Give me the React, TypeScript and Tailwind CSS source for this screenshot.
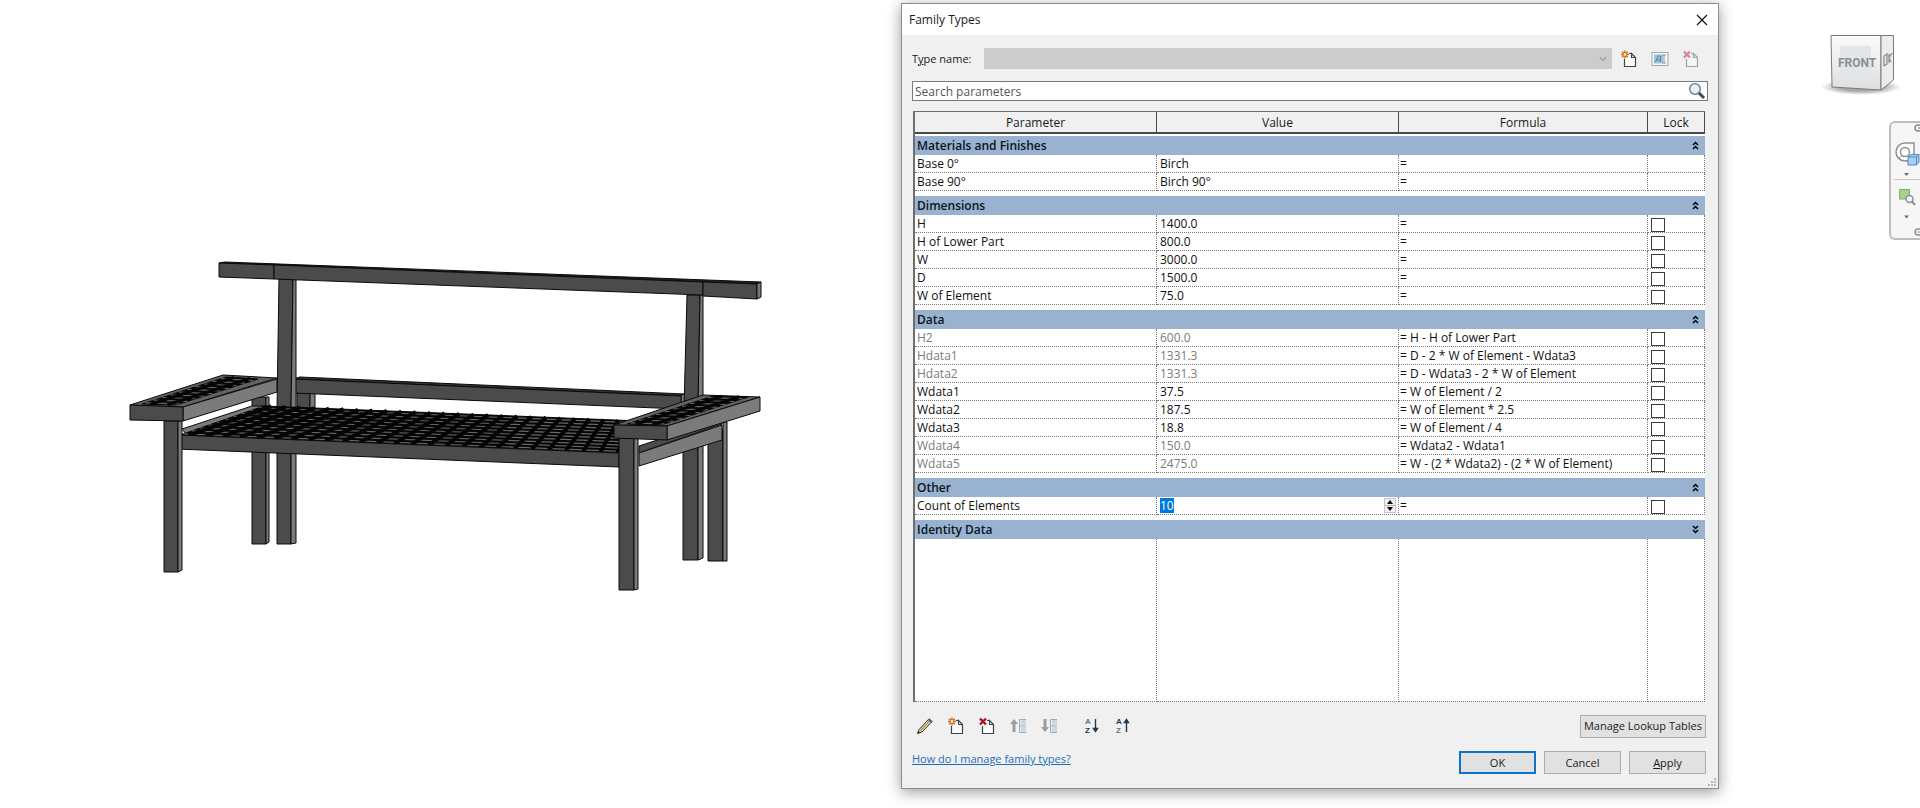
import { Fragment, useState } from 'react';
import type { ReactNode } from 'react';

interface Param {
  name: string;
  value: string;
  formula?: string;
  muted?: boolean;
  lock?: boolean;
  spinner?: boolean;
}

interface ParamGroup {
  title: string;
  rows: Param[];
}

const GROUPS: ParamGroup[] = [
  {
    title: 'Materials and Finishes',
    rows: [
      { name: 'Base 0°', value: 'Birch', lock: false },
      { name: 'Base 90°', value: 'Birch 90°', lock: false },
    ],
  },
  {
    title: 'Dimensions',
    rows: [
      { name: 'H', value: '1400.0' },
      { name: 'H of Lower Part', value: '800.0' },
      { name: 'W', value: '3000.0' },
      { name: 'D', value: '1500.0' },
      { name: 'W of Element', value: '75.0' },
    ],
  },
  {
    title: 'Data',
    rows: [
      { name: 'H2', value: '600.0', formula: 'H - H of Lower Part', muted: true },
      { name: 'Hdata1', value: '1331.3', formula: 'D - 2 * W of Element - Wdata3', muted: true },
      { name: 'Hdata2', value: '1331.3', formula: 'D - Wdata3 - 2 * W of Element', muted: true },
      { name: 'Wdata1', value: '37.5', formula: 'W of Element / 2' },
      { name: 'Wdata2', value: '187.5', formula: 'W of Element * 2.5' },
      { name: 'Wdata3', value: '18.8', formula: 'W of Element / 4' },
      { name: 'Wdata4', value: '150.0', formula: 'Wdata2 - Wdata1', muted: true },
      { name: 'Wdata5', value: '2475.0', formula: 'W - (2 * Wdata2) - (2 * W of Element)', muted: true },
    ],
  },
  { title: 'Other', rows: [{ name: 'Count of Elements', value: '10', spinner: true }] },
  { title: 'Identity Data', rows: [] },
];

type Point = [number, number];

const FRONT = '#4b4b4b';
const SIDE = '#7b7b7b';

const mix = (a: Point, b: Point, t: number): Point => [a[0] + (b[0] - a[0]) * t, a[1] + (b[1] - a[1]) * t];

function Face({ points, fill = FRONT }: { points: string; fill?: string }) {
  return <polygon points={points} fill={fill} stroke="#0a0a0a" strokeWidth="1" strokeLinejoin="round" />;
}

// Black panel crossed by thin slats. Corners run back-left, back-right, front-right, front-left.
function Lattice({ corners, slats, breaks, gap }: { corners: Point[]; slats: number; breaks: number; gap: number }) {
  const [bl, br, fr, fl] = corners;
  return (
    <g>
      <polygon points={corners.map((p) => p.join(',')).join(' ')} fill="#050505" stroke="#050505" />
      {Array.from({ length: slats }, (_, i) => {
        const t = (i + 0.6) / slats;
        const a = mix(bl, fl, t);
        const b = mix(br, fr, t);
        return <line key={i} x1={a[0]} y1={a[1]} x2={b[0]} y2={b[1]} stroke="#686868" strokeWidth="1.2" />;
      })}
      {Array.from({ length: breaks }, (_, i) => {
        const t = (i + 0.5) / breaks;
        const a = mix(bl, br, t);
        const b = mix(fl, fr, t);
        return <line key={i} x1={a[0]} y1={a[1]} x2={b[0]} y2={b[1]} stroke="#050505" strokeWidth={gap} />;
      })}
    </g>
  );
}

function Bench() {
  return (
    <svg viewBox="0 0 901 808" className="block w-full" role="img" aria-label="Bench model">
      {/* back legs */}
      <Face points="252,397 266,397 266,544 252,544" />
      <Face points="266,397 269,397 269,542 266,544" fill={SIDE} />
      <Face points="297,393 310,393 310,412 297,412" />
      <Face points="310,393 315,393 315,412 310,412" fill={SIDE} />
      <Face points="708,430 723,430 723,561 708,561" />
      <Face points="723,422 727,422 727,561 723,561" fill={SIDE} />
      <Face points="683,445 698,440 698,560 683,560" />
      <Face points="698,440 703,440 703,558 698,560" fill={SIDE} />
      <Face points="277,445 291,445 291,544 277,544" />
      <Face points="291,445 296,445 296,543 291,544" fill={SIDE} />

      {/* lower back rail */}
      <Face points="293,379 300,377 685,394 681,396" fill="#333" />
      <Face points="681,395 685,394 685,408 681,409" fill={SIDE} />
      <Face points="293,379 681,396 681,409 293,393" />

      {/* uprights */}
      <Face points="279,278 293,278 291,408 277,408" />
      <Face points="293,278 296,278 296,408 291,408" fill={SIDE} />
      <Face points="687,295 700,295 698,408 684,408" />
      <Face points="700,295 703,295 703,402 698,408" fill={SIDE} />

      {/* top rail */}
      <Face points="219,263 225,262 761,282 757,284 703,282 274,265" fill="#222" />
      <Face points="219,263 274,265 274,279 219,277" />
      <Face points="274,265 703,282 703,295 274,279" />
      <Face points="703,282 757,284 757,299 703,296" />
      <Face points="757,284 761,282 761,297 757,299" fill={SIDE} />

      {/* seat */}
      <Face points="182,429 252,406 266,406 186,434" fill={SIDE} />
      <Lattice
        corners={[
          [264, 406],
          [640, 421],
          [626, 453],
          [180, 435],
        ]}
        slats={10}
        breaks={26}
        gap={4}
      />
      <Face points="177,435 619,453 619,467 177,449" />
      <Face points="639,446 722,419 722,424 639,453" />
      <Face points="639,453 722,425 722,440 639,466" fill={SIDE} />

      {/* left arm */}
      <Face points="164,421 178,421 178,572 164,572" />
      <Face points="178,421 182,421 182,570 178,572" fill={SIDE} />
      <Face points="130,405 223,375 277,378 183,407" fill="#626262" />
      <Lattice
        corners={[
          [226, 377],
          [258, 379],
          [176, 405],
          [142, 404],
        ]}
        slats={10}
        breaks={2}
        gap={3}
      />
      <Face points="183,407 277,379 277,392 183,421" fill={SIDE} />
      <Face points="130,405 183,407 183,421 130,420" />

      {/* right arm */}
      <Face points="619,438 634,438 634,590 619,590" />
      <Face points="634,438 638,438 638,589 634,590" fill={SIDE} />
      <Face points="614,425 703,395 760,397 667,426" fill="#626262" />
      <Lattice
        corners={[
          [713, 396],
          [748, 397],
          [661, 425],
          [627, 424],
        ]}
        slats={10}
        breaks={2}
        gap={3}
      />
      <Face points="667,426 760,397 760,411 667,440" fill={SIDE} />
      <Face points="614,425 667,426 667,440 614,438" />
    </svg>
  );
}

function SheetIcon({ mark, faded }: { mark: 'new' | 'delete'; faded?: boolean }) {
  return (
    <svg width="18" height="18" viewBox="0 0 18 18" className={faded ? 'opacity-45' : ''}>
      <path d="M4.5 8V16.5H15.5V7.500L11.5 3.500H8Z" fill="#fafafa" />
      <path d="M4.5 9V16.5H15.5V7.5H11.5V3.5L15.5 7.5M11.5 3.5H9" fill="none" stroke="#3d4650" strokeWidth="1.2" />
      {mark === 'new' ? (
        <g>
          <path d="M5 .5V8.500M1 4.500H9M2.200 1.700L7.800 7.300M7.800 1.700L2.200 7.300" stroke="#cf6a12" strokeWidth="1.5" />
          <circle cx="5" cy="4.5" r="1.4" fill="#fff3c4" />
        </g>
      ) : (
        <path d="M2 1.500L8 7.500M8 1.500L2 7.500" stroke="#b01020" strokeWidth="2.4" />
      )}
    </svg>
  );
}

function RenameIcon() {
  return (
    <svg width="18" height="18" viewBox="0 0 18 18">
      <rect x="1" y="2.5" width="16" height="13" fill="#f4f6f7" stroke="#9fa8ae" />
      <rect x="3" y="4.5" width="9" height="9" fill="#9cc3da" />
      <path d="M4.500 12L7 6H9.500V12M6 10H9" fill="none" stroke="#5f7f96" />
      <path d="M11 5H15M13 5V13M11 13H15" fill="none" stroke="#8d979e" />
    </svg>
  );
}

function PencilIcon() {
  return (
    <svg width="18" height="18" viewBox="0 0 18 18">
      <path d="M1.500 16.500L3 12.500L13 1.800L16.200 4.500L6 15Z" fill="#d9cfa0" stroke="#3a3a3a" />
      <path d="M12 3L15 6L16.500 4.500L13.300 1.500Z" fill="#5c6468" />
      <path d="M4.500 13.500L13.500 4" stroke="#8c8258" />
      <path d="M1.500 16.500L2.500 14L4 15.500Z" fill="#222" />
    </svg>
  );
}

function MoveIcon({ up }: { up?: boolean }) {
  return (
    <svg width="18" height="18" viewBox="0 0 18 18">
      <path d={up ? 'M5 2L9 7H6.500V15H3.500V7H1Z' : 'M5 15L9 10H6.500V2H3.500V10H1Z'} fill="#9a9da0" />
      <path d="M17 2.500H10.500V15.500H17M10.500 9H17" fill="none" stroke="#9fa9b1" />
      <path d="M12 3H17V8H12ZM12 10H17V15H12Z" fill="#c9dbe6" />
    </svg>
  );
}

function SortIcon({ up }: { up?: boolean }) {
  return (
    <svg width="18" height="18" viewBox="0 0 18 18">
      <g fontFamily="Liberation Sans, sans-serif" fontWeight="700" fontSize="8">
        <text x="2" y="7.4" fill={up ? '#26364f' : '#5d7590'}>A</text>
        <text x="2" y="16.2" fill={up ? '#5d7590' : '#26364f'}>Z</text>
      </g>
      <path
        d={up ? 'M12.500 15V3M10.500 5.500L12.500 2.500L14.500 5.500Z' : 'M12.500 2V14M10.500 11.500L12.500 14.500L14.500 11.500Z'}
        fill="#26364f"
        stroke="#26364f"
        strokeWidth="1.4"
      />
    </svg>
  );
}

function SearchIcon() {
  return (
    <svg width="18" height="18" viewBox="0 0 18 18">
      <circle cx="7" cy="7" r="5.3" fill="#e3f3f6" stroke="#5f7880" strokeWidth="1.3" />
      <path d="M4 6Q5 3.500 8 4" fill="none" stroke="#fff" />
      <path d="M11 11L16 16" stroke="#43494d" strokeWidth="3" />
    </svg>
  );
}

function Chevrons({ down }: { down?: boolean }) {
  return (
    <svg width="7" height="9" viewBox="0 0 7 9" className={down ? 'rotate-180' : ''}>
      <path d="M1 4L3.500 1.500L6 4M1 8L3.500 5.500L6 8" fill="none" stroke="#000" strokeWidth="1.5" />
    </svg>
  );
}

function ToolButton({ label, children }: { label: string; children: ReactNode }) {
  return (
    <button type="button" aria-label={label} title={label} className="block">
      {children}
    </button>
  );
}

function PushButton({ children, primary, wide }: { children: ReactNode; primary?: boolean; wide?: boolean }) {
  return (
    <button
      type="button"
      className={`flex h-[23px] items-center justify-center bg-[#e1e1e1] text-[11px] whitespace-nowrap ${
        wide ? 'w-[126px]' : 'w-[77px]'
      } ${primary ? 'border-2 border-[#0f74c8]' : 'border border-[#adadad]'}`}
    >
      <span>{children}</span>
    </button>
  );
}

const cell = 'h-[18px] border-r border-b border-dotted border-[#7a7a7a] p-0 leading-[17px] whitespace-nowrap';

function ParamRow({ row }: { row: Param }) {
  const tone = row.muted ? 'text-[#7c7c7c]' : 'text-[#111]';
  return (
    <tr>
      <td className={`${cell} ${tone} pl-[2px]`}>{row.name}</td>
      <td className={`${cell} ${tone} pl-[3px]`}>
        {row.spinner ? (
          <div className="flex h-[17px] items-center justify-between pr-[2px]">
            <input
              type="text"
              aria-label={row.name}
              defaultValue={row.value}
              className="h-[15px] w-[14px] bg-[#0078d7] text-white outline-none"
            />
            <div className="flex w-[12px] flex-col border border-[#c4c4c4] bg-[#f0f0f0]">
              <button type="button" aria-label="Increase" className="flex h-[7px] items-center justify-center border-b border-[#b5b5b5]">
                <svg width="6" height="4" viewBox="0 0 6 4"><path d="M3 0L6 4H0Z" /></svg>
              </button>
              <button type="button" aria-label="Decrease" className="flex h-[6px] items-center justify-center">
                <svg width="6" height="4" viewBox="0 0 6 4"><path d="M0 0H6L3 4Z" /></svg>
              </button>
            </div>
          </div>
        ) : (
          row.value
        )}
      </td>
      <td className={`${cell} pl-px text-[#111]`}>= {row.formula}</td>
      <td className={`${cell} pl-[3px]`}>
        {row.lock !== false && (
          <input
            type="checkbox"
            aria-label={`Lock ${row.name}`}
            className="mt-[3px] block size-[14px] appearance-none border border-[#3c3c3c] bg-white checked:bg-[#3c3c3c]"
          />
        )}
      </td>
    </tr>
  );
}

function ParamTable() {
  const [closed, setClosed] = useState<string[]>(['Identity Data']);

  const toggle = (title: string) => {
    setClosed((prev) => (prev.includes(title) ? prev.filter((t) => t !== title) : [...prev, title]));
  };

  const head = 'h-[22px] border-r border-b-2 border-[#4a4a4a] bg-[#f0f0f0] p-0 pt-px font-normal';
  const filler = 'h-[163px] border-r border-b border-dotted border-[#7a7a7a]';

  return (
    <div className="border-t border-l-2 border-[#6e6e6e] bg-white">
      <table className="w-full table-fixed border-separate border-spacing-0">
        <colgroup>
          <col className="w-[242px]" />
          <col className="w-[242px]" />
          <col className="w-[249px]" />
          <col className="w-[57px]" />
        </colgroup>
        <thead>
          <tr>
            <th className={head}>Parameter</th>
            <th className={head}>Value</th>
            <th className={head}>Formula</th>
            <th className={head}>Lock</th>
          </tr>
        </thead>
        <tbody>
          {GROUPS.map((group, index) => {
            const isClosed = closed.includes(group.title);
            return (
              <Fragment key={group.title}>
                <tr>
                  <td colSpan={4} className={index === 0 ? 'h-[2px] p-0' : 'h-[5px] p-0'} />
                </tr>
                <tr>
                  <th colSpan={4} className="h-[19px] bg-[#99b2d0] p-0 text-left">
                    <button
                      type="button"
                      aria-expanded={!isClosed}
                      onClick={() => toggle(group.title)}
                      className="flex h-[19px] w-full items-center justify-between pr-[6px] pl-[2px] font-semibold text-[#0a1420]"
                    >
                      {group.title}
                      <Chevrons down={isClosed} />
                    </button>
                  </th>
                </tr>
                {!isClosed && group.rows.map((row) => <ParamRow key={row.name} row={row} />)}
              </Fragment>
            );
          })}
          <tr>
            <td className={filler} />
            <td className={filler} />
            <td className={filler} />
            <td className={filler} />
          </tr>
        </tbody>
      </table>
    </div>
  );
}

function FamilyTypesDialog() {
  return (
    <section
      role="dialog"
      aria-label="Family Types"
      className="relative mt-[3px] border border-[#8c8c8c] bg-[#f0f0f0] text-[#1a1a1a] shadow-[0_3px_14px_rgba(0,0,0,0.4)]"
    >
      <header className="flex h-[31px] items-center justify-between bg-white pr-[10px] pl-[7px]">
        <h1>Family Types</h1>
        <button type="button" aria-label="Close">
          <svg width="12" height="12" viewBox="0 0 12 12">
            <path d="M1 1L11 11M11 1L1 11" stroke="#111" strokeWidth="1.2" />
          </svg>
        </button>
      </header>

      <div className="px-[10px] pt-[13px] pb-[14px]">
        <div className="flex items-center">
          <label htmlFor="type-name" className="w-[72px] text-[11px]">
            T<u>y</u>pe name:
          </label>
          <div className="relative flex-1">
            <select id="type-name" disabled className="block h-[21px] w-full appearance-none bg-[#cccccc]" />
            <svg width="8" height="6" viewBox="0 0 8 6" className="absolute top-2 right-[5px]">
              <path d="M1 1L4 4.500L7 1" fill="none" stroke="#a3a3a3" strokeWidth="1.3" />
            </svg>
          </div>
          <div className="flex gap-[13px] px-2">
            <ToolButton label="New type"><SheetIcon mark="new" /></ToolButton>
            <ToolButton label="Rename type"><RenameIcon /></ToolButton>
            <ToolButton label="Delete type"><SheetIcon mark="delete" faded /></ToolButton>
          </div>
        </div>

        <div className="mt-3 flex h-5 items-center border border-[#7a7a7a] bg-white pr-px">
          <input
            type="text"
            aria-label="Search parameters"
            placeholder="Search parameters"
            className="h-full flex-1 pl-[2px] outline-none placeholder:text-[#555]"
          />
          <SearchIcon />
        </div>

        <div className="mt-[10px] pr-[3px] pl-px">
          <ParamTable />
        </div>

        <div className="mt-3 flex h-[24px] items-center justify-between pr-[2px]">
          <div className="flex items-center gap-[13px] pl-1">
            <ToolButton label="Edit parameter"><PencilIcon /></ToolButton>
            <ToolButton label="New parameter"><SheetIcon mark="new" /></ToolButton>
            <ToolButton label="Delete parameter"><SheetIcon mark="delete" /></ToolButton>
            <ToolButton label="Move up"><MoveIcon up /></ToolButton>
            <ToolButton label="Move down"><MoveIcon /></ToolButton>
            <div className="flex gap-[13px] pl-3">
              <ToolButton label="Sort ascending"><SortIcon /></ToolButton>
              <ToolButton label="Sort descending"><SortIcon up /></ToolButton>
            </div>
          </div>
          <PushButton wide>
            Mana<u>g</u>e Lookup Tables
          </PushButton>
        </div>

        <div className="mt-[13px] flex items-start justify-between pr-[2px]">
          <a href="#help" className="text-[11px] text-[#1a6fb8] underline">
            How do I manage family types?
          </a>
          <div className="flex gap-2">
            <PushButton primary>OK</PushButton>
            <PushButton>Cancel</PushButton>
            <PushButton>
              <u>A</u>pply
            </PushButton>
          </div>
        </div>
      </div>
      <svg width="10" height="10" viewBox="0 0 10 10" className="absolute right-px bottom-px">
        <path d="M7 1h2v2h-2zM4 4h2v2h-2zM7 4h2v2h-2zM1 7h2v2h-2zM4 7h2v2h-2zM7 7h2v2h-2z" fill="#b9b9b9" />
      </svg>
    </section>
  );
}

function ViewCube() {
  return (
    <svg width="90" height="70" viewBox="0 0 90 70" role="img" aria-label="View cube">
      <defs>
        <radialGradient id="cube-shadow">
          <stop offset="0.5" stopColor="#000" stopOpacity="0.35" />
          <stop offset="1" stopColor="#000" stopOpacity="0" />
        </radialGradient>
        <linearGradient id="cube-front" x1="0" y1="0" x2="0" y2="1">
          <stop offset="0" stopColor="#fbfbfb" />
          <stop offset="1" stopColor="#dfdfdf" />
        </linearGradient>
      </defs>
      <ellipse cx="42" cy="57" rx="40" ry="8" fill="url(#cube-shadow)" />
      <path d="M12 5.500L62 5.500L62 60L13 57Z" fill="url(#cube-front)" stroke="#7a7a7a" />
      <path d="M62 5.500H74.500V50L62 60Z" fill="#ececec" stroke="#7a7a7a" />
      <path d="M21 16H52V50H21Z" fill="#e3e6e8" />
      <text x="19" y="37" fontFamily="Roboto, sans-serif" fontWeight="700" fontSize="12" fill="#8b8e92">
        FRONT
      </text>
      <path d="M65 26V36M65 26L68 24V34L65 36M70 24V33M70 28L73 23M70 28L72 32" fill="none" stroke="#8b8e92" strokeWidth="1.3" />
    </svg>
  );
}

function NavigationBar() {
  return (
    <nav aria-label="Navigation" className="h-[119px] w-[31px] overflow-hidden rounded-l-md border-2 border-r-0 border-[#bdbdbd] bg-[#f6f6f6]">
      <svg width="40" height="115" viewBox="0 0 40 115">
        <rect x="24" y="2" width="9" height="6" rx="3" fill="none" stroke="#8f8f8f" strokeWidth="1.5" />
        <path d="M27 3.500L30 6.500M30 3.500L27 6.500" stroke="#8f8f8f" />
        <path d="M14 20H23V33Q21 38 14 38A9 9 0 0 1 14 20Z" fill="#fff" stroke="#8d8f92" strokeWidth="1.5" />
        <circle cx="14" cy="29" r="4.5" fill="#fff" stroke="#8d8f92" strokeWidth="1.5" />
        <path d="M11 32.500L7 36" stroke="#8d8f92" />
        <path d="M17 34L20 31.500H28V39L25.500 42H17Z" fill="#a9d0f3" stroke="#4d87c4" />
        <path d="M17 34H25.500V42M25.500 34L28 31.500" fill="none" stroke="#4d87c4" />
        <path d="M13 50H18L15.500 53Z" fill="#6f6f6f" />
        <path d="M3 56.500H40" stroke="#c9c9c9" />
        <path d="M8.500 66.500H18.500V76H8.500Z" fill="#a5cf93" stroke="#7fae6c" />
        <circle cx="18.5" cy="76" r="3.5" fill="#f6f6f6" stroke="#8d8f92" strokeWidth="1.5" />
        <path d="M21 78.500L24 82" stroke="#8d8f92" strokeWidth="2" />
        <path d="M13 92.500H18L15.500 95.500Z" fill="#6f6f6f" />
        <rect x="24" y="106" width="9" height="6" rx="3" fill="none" stroke="#8f8f8f" strokeWidth="1.5" />
        <path d="M26 109H31" stroke="#8f8f8f" />
      </svg>
    </nav>
  );
}

export default function App() {
  return (
    <main className="grid min-h-screen grid-cols-[901fr_818fr_201fr] items-start overflow-hidden bg-white font-['Open_Sans','Noto_Sans',sans-serif] text-[12px] leading-4">
      <Bench />
      <FamilyTypesDialog />
      <aside className="flex flex-col items-end pt-[30px]">
        <div className="pr-[11px]">
          <ViewCube />
        </div>
        <div className="pt-[21px]">
          <NavigationBar />
        </div>
      </aside>
    </main>
  );
}
